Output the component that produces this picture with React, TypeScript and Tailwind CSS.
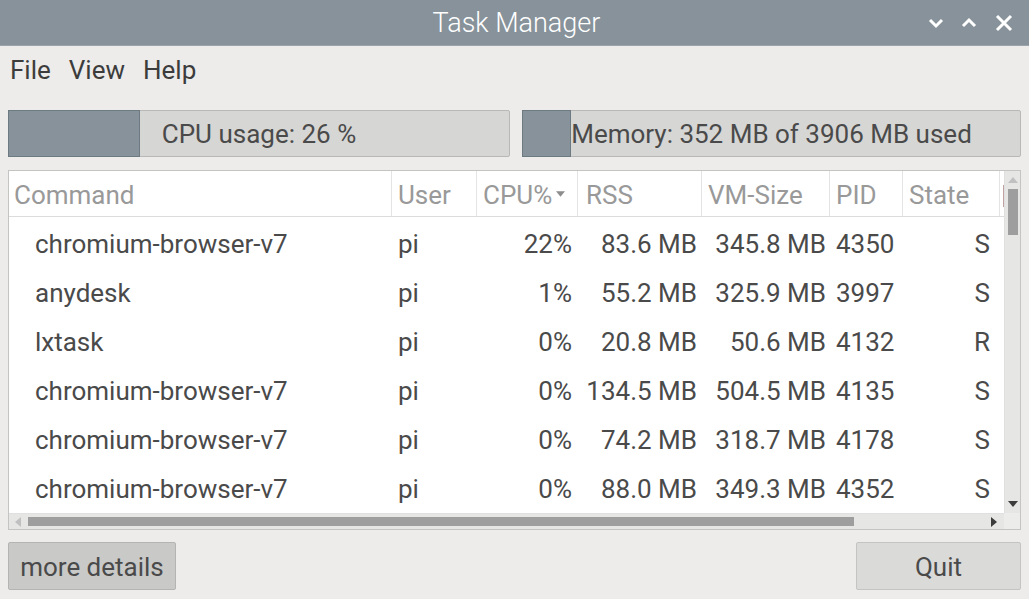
import React from "react";

const rows = [
  ["chromium-browser-v7", "pi", "22%", "83.6 MB", "345.8 MB", "4350", "S"],
  ["anydesk", "pi", "1%", "55.2 MB", "325.9 MB", "3997", "S"],
  ["lxtask", "pi", "0%", "20.8 MB", "50.6 MB", "4132", "R"],
  ["chromium-browser-v7", "pi", "0%", "134.5 MB", "504.5 MB", "4135", "S"],
  ["chromium-browser-v7", "pi", "0%", "74.2 MB", "318.7 MB", "4178", "S"],
  ["chromium-browser-v7", "pi", "0%", "88.0 MB", "349.3 MB", "4352", "S"],
];

const cols = "grid-cols-[383px_85px_101px_124px_128px_73px_97px_60px]";

export default function App() {
  return (
    <div
      className="w-[1029px] h-[599px] bg-[#edeceb] flex flex-col overflow-hidden text-[#4a4a4a]"
      style={{ fontFamily: "Roboto, 'Liberation Sans', sans-serif" }}
    >
      {/* Title bar */}
      <div className="h-[46px] bg-[#87929a] border-b border-[#9aa4aa] flex items-center relative shrink-0">
        <div className="flex-1 text-center text-white font-light text-[27px] leading-none pl-[4px] pt-[2px]">Task Manager</div>
        <div className="absolute right-[15px] top-0 h-full flex items-center gap-[17px]">
          <svg width="16" height="12" viewBox="0 0 16 12"><path d="M2 3 L8 9 L14 3" stroke="white" strokeWidth="3" fill="none" /></svg>
          <svg width="16" height="12" viewBox="0 0 16 12"><path d="M2 9 L8 3 L14 9" stroke="white" strokeWidth="3" fill="none" /></svg>
          <svg width="20" height="20" viewBox="0 0 20 20"><path d="M3 3 L17 17 M17 3 L3 17" stroke="white" strokeWidth="3" fill="none" /></svg>
        </div>
      </div>

      {/* Menu */}
      <div className="h-[48px] flex items-center gap-[18px] pl-[10px] text-[26px] text-[#3c3c3c] shrink-0">
        <span>File</span>
        <span>View</span>
        <span>Help</span>
      </div>

      {/* Progress bars */}
      <div className="flex gap-[12px] px-[8px] mt-[16px] shrink-0">
        <div className="relative w-[502px] h-[47px] bg-[#d6d6d5] border border-[#b8b8b6] rounded-[2px] flex items-center justify-center">
          <div className="absolute left-[-1px] top-[-1px] bottom-[-1px] w-[132px] bg-[#87929a] border border-[#6e7a82]" />
          <span className="relative text-[26px] pt-[2px]">CPU usage: 26 %</span>
        </div>
        <div className="relative w-[499px] h-[47px] bg-[#d6d6d5] border border-[#b8b8b6] rounded-[2px] flex items-center justify-center">
          <div className="absolute left-[-1px] top-[-1px] bottom-[-1px] w-[49px] bg-[#87929a] border border-[#6e7a82]" />
          <span className="relative text-[26px] pt-[2px]">Memory: 352 MB of 3906 MB used</span>
        </div>
      </div>

      {/* Table */}
      <div className="mx-[8px] mt-[13px] h-[360px] border border-[#c4c4c2] bg-white relative overflow-hidden shrink-0">
        <div className="absolute left-0 top-0 right-[16px] bottom-[16px] overflow-hidden">
          <div className={`grid ${cols} h-[46px] border-b border-[#dcdcdc] text-[26px] text-[#999999] items-center w-[1100px]`}>
            <div className="pl-[5px] pt-[4px] h-full flex items-center border-r border-[#e4e4e4]">Command</div>
            <div className="pl-[6px] pt-[4px] h-full flex items-center border-r border-[#e4e4e4]">User</div>
            <div className="pl-[6px] pt-[4px] h-full flex items-center border-r border-[#e4e4e4]">
              CPU%
              <svg width="9" height="6" viewBox="0 0 10 6" className="ml-[4px] -mt-[4px]"><path d="M0 0 L10 0 L5 6Z" fill="#8d8d8d" /></svg>
            </div>
            <div className="pl-[8px] pt-[4px] h-full flex items-center border-r border-[#e4e4e4]">RSS</div>
            <div className="pl-[6px] pt-[4px] h-full flex items-center border-r border-[#e4e4e4]">VM-Size</div>
            <div className="pl-[6px] pt-[4px] h-full flex items-center border-r border-[#e4e4e4]">PID</div>
            <div className="pl-[6px] pt-[4px] h-full flex items-center border-r border-[#e4e4e4]">State</div>
            <div className="pl-[3px] h-full flex items-center">
              <div className="w-[2px] h-[22px] mt-[4px] bg-[#c0a0a0]" />
            </div>
          </div>
          {rows.map((r, i) => (
            <div key={i} className={`grid ${cols} h-[49px] pt-[5px] text-[26px] items-center w-[1100px]`}>
              <div className="pl-[26px]">{r[0]}</div>
              <div className="pl-[6px]">{r[1]}</div>
              <div className="text-right pr-[6px]">{r[2]}</div>
              <div className="text-right pr-[5px]">{r[3]}</div>
              <div className="text-right pr-[4px]">{r[4]}</div>
              <div className="pl-[6px]">{r[5]}</div>
              <div className="text-right pr-[10px]">{r[6]}</div>
              <div />
            </div>
          ))}
        </div>
        {/* vertical scrollbar */}
        <div className="absolute right-0 top-0 bottom-[16px] w-[16px] bg-[#e6e6e5] border-l border-[#e0e0e0] flex flex-col items-center">
          <svg width="10" height="6" viewBox="0 0 10 6" className="mt-[6px]"><path d="M0 6 L10 6 L5 0Z" fill="#c0c0c0" /></svg>
          <div className="mt-[6px] w-[10px] h-[46px] bg-[#9e9e9e]" />
          <div className="flex-1" />
          <svg width="10" height="6" viewBox="0 0 10 6" className="mb-[6px]"><path d="M0 0 L10 0 L5 6Z" fill="#3c3c3c" /></svg>
        </div>
        {/* horizontal scrollbar */}
        <div className="absolute left-0 right-[16px] bottom-0 h-[16px] bg-[#e6e6e5] border-t border-[#e0e0e0] flex items-center">
          <svg width="6" height="10" viewBox="0 0 6 10" className="ml-[6px]"><path d="M6 0 L6 10 L0 5Z" fill="#c0c0c0" /></svg>
          <div className="ml-[7px] w-[826px] h-[9px] bg-[#9e9e9e]" />
          <div className="flex-1" />
          <svg width="6" height="10" viewBox="0 0 6 10" className="mr-[7px]"><path d="M0 0 L0 10 L6 5Z" fill="#3c3c3c" /></svg>
        </div>
        <div className="absolute right-0 bottom-0 w-[16px] h-[16px] bg-[#ececeb]" />
      </div>

      {/* Buttons */}
      <div className="flex justify-between px-[8px] mt-[12px] shrink-0">
        <div className="w-[168px] h-[48px] pt-[2px] bg-[#c9c9c8] border border-[#b4b4b2] rounded-[2px] flex items-center justify-center text-[26px]">more details</div>
        <div className="w-[165px] h-[48px] pt-[2px] bg-[#dadad9] border border-[#c4c4c2] rounded-[2px] flex items-center justify-center text-[26px]">Quit</div>
      </div>
    </div>
  );
}
